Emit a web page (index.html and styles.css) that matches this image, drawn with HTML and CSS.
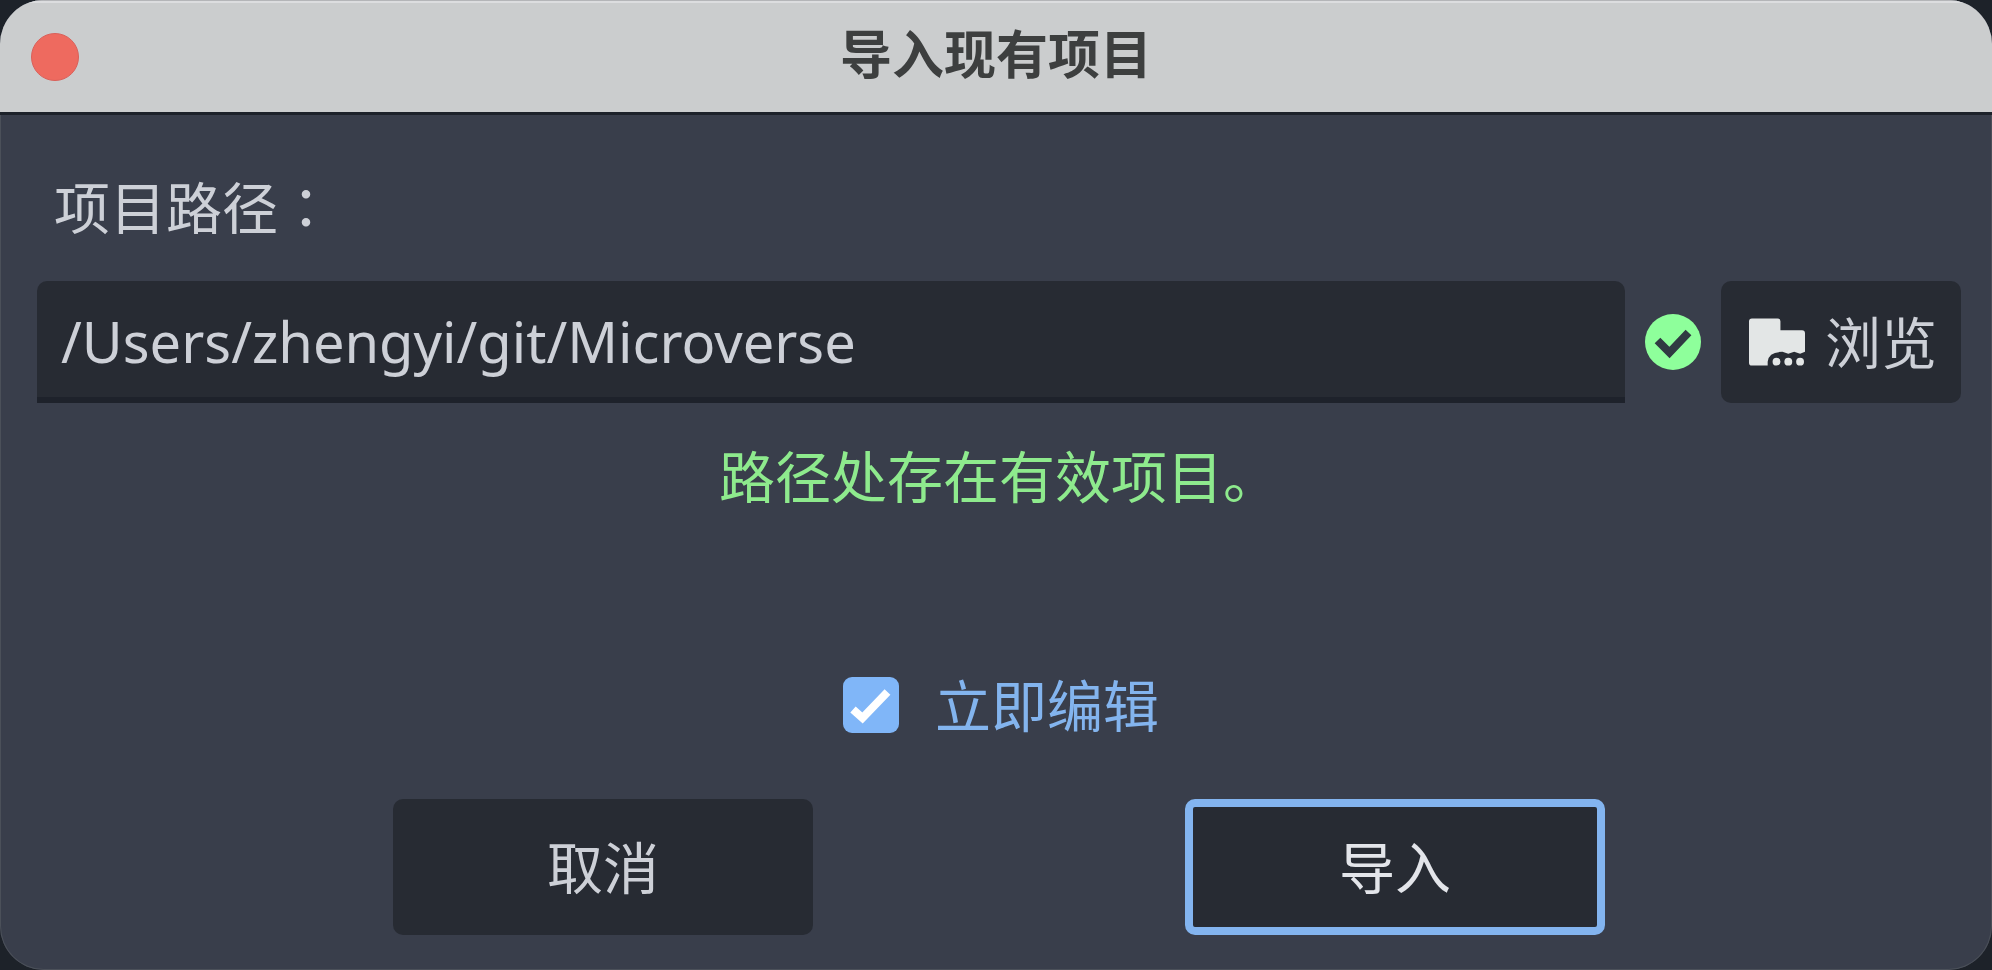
FILE: index.html
```html
<!DOCTYPE html>
<html lang="zh-CN">
<head>
<meta charset="utf-8">
<meta name="viewport" content="width=device-width, initial-scale=1">
<title>导入现有项目</title>
<link rel="stylesheet" href="styles.css">
</head>
<body>
<main class="window">
  <header class="titlebar">
    <button class="close" type="button" aria-label="关闭"></button>
    <h1 class="title">导入现有项目</h1>
  </header>
  <form class="content">
    <label class="path-label" for="path">项目路径<span class="colon" lang="zh-TW">：</span></label>
    <div class="path-row">
      <input class="path-input" id="path" type="text" value="/Users/zhengyi/git/Microverse" spellcheck="false">
      <svg class="status-icon" viewBox="0 0 56 56" role="img" aria-label="有效">
        <circle cx="28" cy="28" r="28" fill="#8eff9b"/>
        <path d="M12.500 26.500 L24.500 38.500 L43.500 18.500" fill="none" stroke="#303a42" stroke-width="8"/>
      </svg>
      <button class="button browse" type="button">
        <svg class="folder-icon" viewBox="0 0 57 48" aria-hidden="true">
          <path d="M3 0H29Q32 0 32 3V12H54Q57 12 57 15V34L52 36L46 34L40 36L34 34Q20 34 19 44V48H3Q0 48 0 45V3Q0 0 3 0Z" fill="#e3e6e6"/>
          <circle cx="28" cy="44" r="4" fill="#e3e6e6"/>
          <circle cx="40" cy="44" r="4" fill="#e3e6e6"/>
          <circle cx="52" cy="44" r="4" fill="#e3e6e6"/>
        </svg>
        <span>浏览</span>
      </button>
    </div>
    <p class="message">路径处存在有效项目。</p>
    <label class="edit-now">
      <span class="check">
        <input class="check-input" type="checkbox" checked>
        <svg class="check-mark" viewBox="0 0 56 56" aria-hidden="true">
          <path d="M10 32.500 L19.500 41 L44.500 15" fill="none" stroke="#fff" stroke-width="8"/>
        </svg>
      </span>
      <span>立即编辑</span>
    </label>
    <div class="actions">
      <button class="button action" type="button">取消</button>
      <button class="button action primary" type="submit">导入</button>
    </div>
  </form>
</main>
</body>
</html>
```
FILE: styles.css
```css
* {
  box-sizing: border-box;
}

body {
  margin: 0;
  background: #1d2229;
  color: #cdd0d7;
  font-family: "Noto Sans", "Noto Sans CJK SC", sans-serif;
  font-size: 56px;
  line-height: 76px;
}

.window {
  display: flex;
  flex-direction: column;
  min-height: 100vh;
  overflow: hidden;
  border-radius: 44px;
  background: #393e4b;
  box-shadow: inset 0 0 0 1px #4b5059;
}

.titlebar {
  display: grid;
  grid-template-columns: 1fr auto 1fr;
  align-items: center;
  height: 115px;
  padding: 0 31px;
  border-top: 1px solid #b4b5b8;
  border-bottom: 3px solid #1d222a;
  background: #cbcdce;
  box-shadow: inset 0 2px 0 #dcdddf;
}

.close {
  width: 48px;
  height: 48px;
  padding: 0;
  border: 1px solid #d9605a;
  border-radius: 50%;
  background: #ee6a5f;
}

.title {
  margin: 0;
  padding-bottom: 10px;
  color: #3d3f3f;
  font-family: "Noto Sans CJK SC", sans-serif;
  font-size: 52px;
  font-weight: 700;
  line-height: 76px;
}

.content {
  display: flex;
  flex: 1;
  flex-direction: column;
  padding: 52px 31px 35px 37px;
}

.path-label {
  padding-left: 17px;
}

.colon {
  font-family: "Noto Sans CJK TC", sans-serif;
}

.path-row {
  display: flex;
  align-items: center;
  gap: 20px;
  margin-top: 36px;
}

.path-input {
  flex: 1;
  min-width: 0;
  height: 122px;
  padding: 4px 24px 0;
  border: 0;
  border-bottom: 6px solid #1e222b;
  border-radius: 10px 10px 0 0;
  outline: none;
  background: #272b33;
  color: inherit;
  font: inherit;
}

.status-icon {
  flex: none;
  width: 56px;
  height: 56px;
}

.button {
  border: 0;
  border-radius: 10px;
  background: #272b33;
  color: inherit;
  font: inherit;
}

.browse {
  display: flex;
  align-items: center;
  gap: 20px;
  height: 122px;
  padding: 0 24px 0 28px;
}

.folder-icon {
  width: 56px;
  height: 48px;
}

.message {
  margin: 35px 0 auto;
  color: #8eea8d;
  text-align: center;
}

.edit-now {
  display: flex;
  align-items: center;
  align-self: center;
  gap: 36px;
  padding-left: 4px;
  color: #83b4ee;
}

.check {
  display: grid;
}

.check-input {
  grid-area: 1 / 1;
  width: 56px;
  height: 56px;
  margin: 0;
  border-radius: 9px;
  appearance: none;
  background: #4a5060;
}

.check-input:checked {
  background: #80b6f8;
}

.check-mark {
  grid-area: 1 / 1;
  width: 56px;
  height: 56px;
  pointer-events: none;
  visibility: hidden;
}

.check-input:checked + .check-mark {
  visibility: visible;
}

.actions {
  display: flex;
  justify-content: space-evenly;
  gap: 16px;
  margin-top: 56px;
}

.action {
  width: 420px;
  height: 136px;
}

.primary {
  border: 8px solid #83b4ef;
  color: #e3e5ea;
}
```
